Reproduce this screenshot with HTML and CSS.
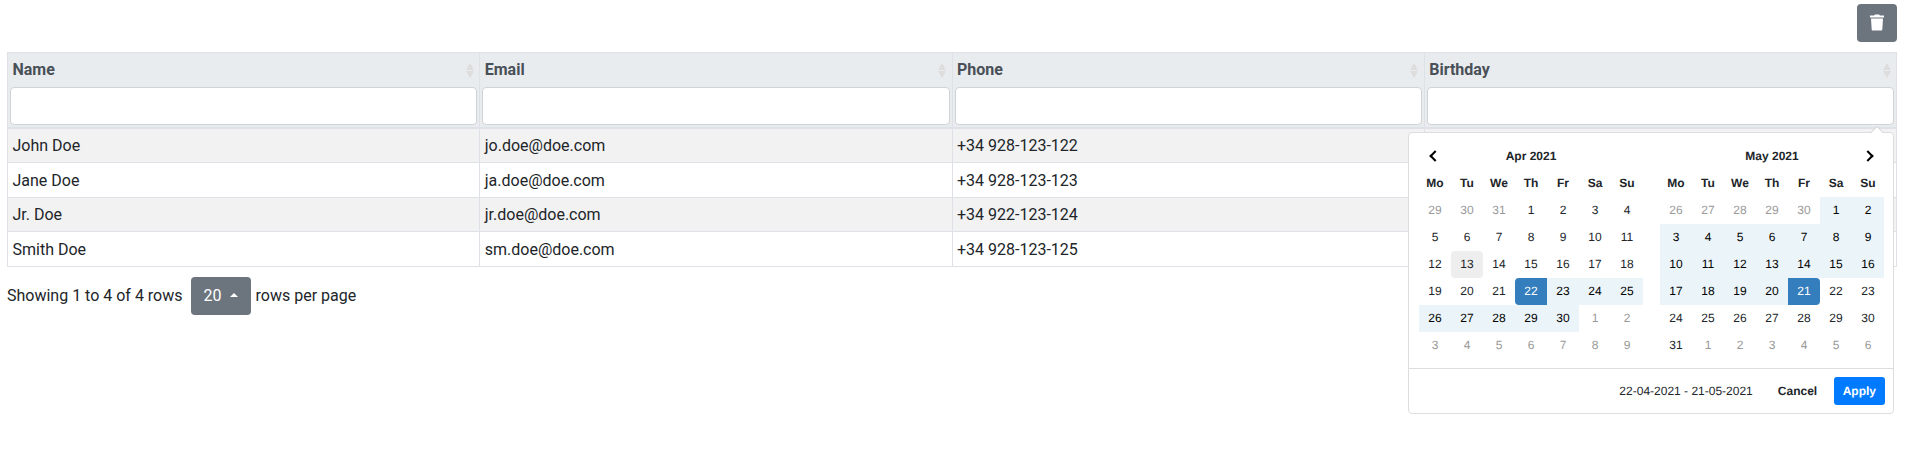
FILE: index.html
```html
<!DOCTYPE html>
<html lang="en"><head><meta charset="utf-8"><title>Contacts</title><link rel="stylesheet" href="styles.css"></head>
<body>
<div class="toolbar"><button class="btn trash" aria-label="Clear"><svg width="14" height="17" viewBox="0 0 14 17" fill="#fff"><path d="M0 1.5h4L5 .5h4l1 1h4v2H0zM1 4.5h12l-.7 11q-.1 1-1 1H2.7q-.9 0-1-1z"/></svg></button></div>
<table class="grid"><thead><tr id="heads"></tr></thead><tbody id="rows"></tbody></table>
<div class="footer"><span>Showing 1 to 4 of 4 rows</span><button class="btn size">20<i class="caret"></i></button><span>rows per page</span></div>
<div class="picker"><div class="calendars" id="cals"></div><div class="actions"><span class="range">22-04-2021 - 21-05-2021</span><button class="act">Cancel</button><button class="act apply">Apply</button></div></div>
<script src="app.js"></script></body></html>
```
FILE: styles.css
```css
*{box-sizing:border-box}
body{margin:0;padding:0 8px 0 7px;font:16px/24px Roboto,sans-serif;color:#212529;background:#fff;position:relative;height:450px;overflow:hidden}
button{font:inherit;border:0;padding:0}
.toolbar{display:flex;justify-content:flex-end;padding:4px 1px 10px 0}
.btn{background:#6c757d;color:#fff;border-radius:4px;height:38px;display:flex;align-items:center;justify-content:center}
.trash{width:40px}
.trash svg{margin-bottom:1px}
.grid{width:1890px;table-layout:fixed;border-collapse:collapse}
.grid th,.grid td{border:1px solid #dee2e6;padding:0;text-align:left}
.grid th{background:#e9ecef;color:#495057;font-weight:700;vertical-align:top;border-bottom-width:2px}
.title{display:flex;align-items:center;justify-content:space-between;height:34px;padding:0 5.5px 0 4.5px}
.filter{height:38px;margin:0 2px 2px;background:#fff;border:1px solid #ced4da;border-radius:4px}
.grid td{padding:4px 4.5px;height:34.5px}
.grid tbody tr:nth-child(n+2) td{padding:5.5px 4.5px 4px}
.grid tbody tr:nth-child(odd){background:#f2f2f2}
.footer{display:flex;align-items:center;margin-top:10px}
.size{width:60px;margin:0 5px 0 8px;padding-top:1px}
.caret{border:solid transparent;border-width:0 4.8px 4.8px;border-bottom-color:#fff;margin:0 0 2px 8px}
.picker{position:absolute;left:1408px;top:132px;width:486px;height:282px;background:#fff;border:1px solid #ddd;border-radius:4px;font:12px Arial,"Liberation Sans",sans-serif;color:#212529;text-rendering:geometricPrecision}
.picker button{text-rendering:inherit}
.picker::before,.picker::after{content:"";position:absolute;right:9px;top:-7px;border:7px solid transparent;border-top:0;border-bottom-color:#ccc}
.picker::after{right:10px;top:-6px;border-width:0 6px 6px;border-bottom-color:#fff}
.calendars{display:flex;gap:17px;padding:10px 9px 0 10px;height:235px}
.month{display:grid;grid-template-columns:repeat(7,32px);grid-auto-rows:27px;align-content:start}
.month>*{display:flex;align-items:center;justify-content:center;border-radius:4px;padding-bottom:1px}
.name{grid-column:span 5}
.name,.dow{font-weight:700}
.arrow{width:8px;height:8px;border:solid #000;border-width:0 2px 2px 0;transform:rotate(-45deg)}
.arrow.prev{transform:rotate(135deg)}
.off{color:#999}
.in{background:#ebf4f8;color:#000;border-radius:0!important}
.sel{background:#357ebd;color:#fff}
.today{background:#eee}
.start{border-radius:4px 0 0 4px!important}
.end{border-radius:0 4px 4px 0!important}
.actions{border-top:1px solid #ddd;padding:8px;display:flex;justify-content:flex-end;align-items:center}
.act{height:28px;padding:0 9px;background:none;font-weight:700;border-radius:3px;color:#212529}
.range{padding-right:16px}
.apply{background:#007bff;color:#fff;margin-left:7.5px}
```
FILE: app.js
```js
const people=[["John Doe","jo.doe@doe.com","+34 928-123-122",""],["Jane Doe","ja.doe@doe.com","+34 928-123-123",""],["Jr. Doe","jr.doe@doe.com","+34 922-123-124",""],["Smith Doe","sm.doe@doe.com","+34 928-123-125",""]];
const sort='<svg width="8" height="15" viewBox="0 0 8 15" fill="#ddd"><path d="M0 7l4-7 4 7zM0 8l4 7 4-7z"/></svg>';
heads.innerHTML=["Name","Email","Phone","Birthday"].map(t=>`<th><div class="title">${t}${sort}</div><div class="filter"></div></th>`).join('');
rows.innerHTML=people.map(r=>'<tr>'+r.map(c=>`<td>${c}</td>`).join('')+'</tr>').join('');
function month(name,y,m,left){
 let h='<div class="month">'+`<span>${left?'<i class="arrow prev"></i>':''}</span><span class="name">${name}</span><span>${left?'':'<i class="arrow"></i>'}</span>`;
 h+=['Mo','Tu','We','Th','Fr','Sa','Su'].map(d=>`<span class="dow">${d}</span>`).join('');
 const offset=(new Date(y,m,1).getDay()+6)%7;
 for(let i=0;i<42;i++){const d=new Date(y,m,1-offset+i),n=d.getDate();let c='';
  if(d.getMonth()!==m)c='off';
  else if(m===3){if(n===22)c='sel start';else if(n>22)c='in';else if(n===13)c='today'}
  else if(n<21)c='in';else if(n===21)c='sel end';
  h+=`<span class="${c}">${n}</span>`}
 return h+'</div>'}
cals.innerHTML=month('Apr 2021',2021,3,true)+month('May 2021',2021,4,false);
```
